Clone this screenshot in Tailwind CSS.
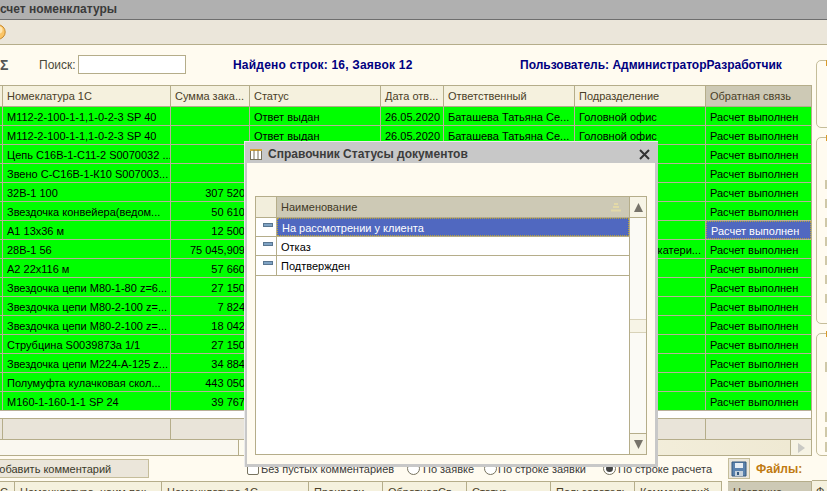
<!DOCTYPE html>
<html lang="ru">
  <head>
    <meta charset="UTF-8" />
    <title>Расчет номенклатуры</title>
    <script src="https://cdn.jsdelivr.net/npm/@tailwindcss/browser@4"></script>
  </head>
  <body class="w-[827px] h-[491px] overflow-hidden relative bg-[#fffbf0] text-[11px] leading-[20px] text-black font-['Liberation_Sans',sans-serif]">
    <!-- title + toolbar -->
    <div class="h-[20px] bg-[#b0b0b0] border-b border-[#6e6e6e] text-[#3a3a3a] font-bold text-[12px] leading-[19px] whitespace-nowrap">счет номенклатуры</div>
    <div class="h-[25px] bg-[#ebe6da] border-b border-[#b5ad8a] flex items-center">
      <svg class="w-[16px] h-[16px] -ml-[10px]" viewBox="0 0 16 16"><circle cx="8" cy="8" r="7.2" fill="#fbc566" stroke="#c78a2e"/><circle cx="9" cy="6" r="3.5" fill="#ffe6b0"/></svg>
    </div>

    <div class="flex">
      <div class="w-[812px] shrink-0">
        <!-- search row -->
        <div class="h-[40px] flex items-center relative">
          <span class="w-[39px] font-bold text-[#555] text-[14px]">Σ</span>
          <span class="text-[#4a4a3a] w-[39px] text-[12px]">Поиск:</span>
          <div class="w-[108px] h-[19px] bg-white border border-[#b5ad8a] mt-[-1px]"></div>
          <span class="ml-[47px] w-[287px] font-bold text-[12px] tracking-[0.2px] text-[#000080] whitespace-nowrap">Найдено строк: 16, Заявок 12</span>
          <span class="font-bold text-[12px] text-[#000080] whitespace-nowrap">Пользователь: АдминистраторРазработчик</span>
        </div>

        <!-- main table -->
        <div class="border-t border-[#b5ad8a] border-r">
          <div id="grid-head" class="flex h-[21px] bg-[#f5f1de] text-[#4a4028] border-b border-[#b5ad8a]">
            <div class="w-[3px] border-r border-[#b5ad8a]"></div>
            <div class="w-[168px] px-[4px] border-r border-[#b5ad8a] leading-[21px]">Номеклатура 1С</div>
            <div class="w-[79px] px-[4px] border-r border-[#b5ad8a] leading-[21px] whitespace-nowrap">Сумма зака...</div>
            <div class="w-[131px] px-[4px] border-r border-[#b5ad8a] leading-[21px]">Статус</div>
            <div class="w-[63px] px-[4px] border-r border-[#b5ad8a] leading-[21px] whitespace-nowrap">Дата отв...</div>
            <div class="w-[131px] px-[4px] border-r border-[#b5ad8a] leading-[21px]">Ответственный</div>
            <div class="w-[131px] px-[4px] border-r border-[#b5ad8a] leading-[21px]">Подразделение</div>
            <div class="w-[105px] px-[4px] bg-[#cdc9b5] leading-[21px]">Обратная связь</div>
          </div>
          <div id="grid-rows"></div>
          <div class="h-[7px] bg-white"></div>
          <div class="flex h-[22px] bg-[#e9e4d9] border-y border-[#b5ad8a]">
            <div class="w-[3px] border-r border-[#b5ad8a]"></div>
            <div class="w-[168px] border-r border-[#b5ad8a]"></div>
            <div class="w-[79px] border-r border-[#b5ad8a]"></div>
            <div class="w-[131px] border-r border-[#b5ad8a]"></div>
            <div class="w-[63px] border-r border-[#b5ad8a]"></div>
            <div class="w-[131px] border-r border-[#b5ad8a]"></div>
            <div class="w-[131px] border-r border-[#b5ad8a]"></div>
          </div>
          <div class="flex h-[16px] border-b border-[#b5ad8a]">
            <div class="w-[239px] bg-[#faf8f0] border-r border-[#b5ad8a]"></div>
            <div class="flex-1 bg-linear-to-r from-[#fdfbef] to-[#efe9d3]"></div>
            <div class="w-[21px] bg-[#f6f3e4] border-l border-[#b5ad8a] flex items-center justify-center">
              <svg class="w-[7px] h-[10px]" viewBox="0 0 7 10"><path d="M0 0L7 5L0 10Z" fill="#c9c9c4"/></svg>
            </div>
          </div>
        </div>

        <!-- comments bar -->
        <div class="h-[25px] flex items-center relative">
          <div class="w-[195px] h-[19px] -ml-[46px] shrink-0 bg-[#ebe6da] border border-[#c5bd9a] text-center text-[#3a3a2a] leading-[18px]">Добавить комментарий</div>
          <span class="w-[12px] h-[12px] ml-[98px] shrink-0 rounded-[2px] border border-[#77735f] bg-white"></span>
          <span class="ml-[2px] w-[146px] text-[#3a3a3a] whitespace-nowrap">Без пустых комментариев</span>
          <span class="w-[13px] h-[13px] shrink-0 rounded-full border border-[#77735f] bg-white"></span>
          <span class="ml-[3px] w-[61px] text-[#3a3a3a] whitespace-nowrap">По заявке</span>
          <span class="w-[13px] h-[13px] shrink-0 rounded-full border border-[#77735f] bg-white"></span>
          <span class="ml-[1px] w-[105px] text-[#3a3a3a] whitespace-nowrap">По строке заявки</span>
          <span class="w-[13px] h-[13px] shrink-0 rounded-full border border-[#77735f] bg-white flex items-center justify-center"><span class="w-[7px] h-[7px] rounded-full bg-[#444]"></span></span>
          <span class="ml-[2px] w-[110px] text-[#3a3a3a] whitespace-nowrap">По строке расчета</span>
          <div class="w-[22px] h-[21px] shrink-0 bg-[#ebe6da] border border-[#c5bd9a] flex items-center justify-center">
            <svg class="w-[16px] h-[16px]" viewBox="0 0 16 16"><path d="M1 1H15V15H1Z" fill="#5b82ad" stroke="#35597f"/><rect x="4" y="2" width="8" height="5" fill="#e8eef4"/><rect x="4" y="10" width="8" height="5" fill="#c6d2dc"/><rect x="6" y="11" width="2" height="3" fill="#35597f"/></svg>
          </div>
          <span class="ml-[6px] font-bold text-[12px] text-[#c07a10]">Файлы:</span>
        </div>

        <!-- lower tables header -->
        <div class="flex h-[21px] text-[#4a4028] whitespace-nowrap">
          <div class="flex w-[722px] bg-[#f5f1de] border-t border-r border-[#b5ad8a] leading-[20px] mr-[6px]">
            <div class="w-[15px] border-r border-[#b5ad8a] overflow-hidden">С</div>
            <div class="w-[147px] pl-[5px] border-r border-[#b5ad8a] overflow-hidden">Номенклатура, наим.пок</div>
            <div class="w-[147px] pl-[5px] border-r border-[#b5ad8a] overflow-hidden">Номенклатура 1С</div>
            <div class="w-[74px] pl-[5px] border-r border-[#b5ad8a] overflow-hidden">Проиводи</div>
            <div class="w-[84px] pl-[5px] border-r border-[#b5ad8a] overflow-hidden">ОбратнаяСв</div>
            <div class="w-[84px] pl-[5px] border-r border-[#b5ad8a] overflow-hidden">Статус</div>
            <div class="w-[84px] pl-[5px] border-r border-[#b5ad8a] overflow-hidden">Пользователь</div>
            <div class="flex-1 pl-[5px] overflow-hidden">Комментарий</div>
          </div>
          <div class="w-[84px] pl-[5px] bg-[#cdc9b5] border-t border-r border-[#b5ad8a] leading-[20px] shrink-0">Название</div>
        </div>
      </div>

      <!-- right side groups, cut off by the window -->
      <div class="flex-1 pl-[4px] pt-[15px] flex flex-col gap-[9px]">
        <div class="relative w-[24px] h-[68px] rounded-[5px] border border-[#c5bd9a]">
          <span class="absolute left-[9px] -top-[1px] w-[2px] h-[6px] bg-[#d99a2b]"></span>
        </div>
        <div class="relative w-[24px] h-[187px] rounded-[5px] border border-[#c5bd9a] pl-[8px] pt-[42px] flex flex-col gap-[10px]">
          <span class="absolute left-[9px] -top-[3px] w-[2px] h-[6px] bg-[#d99a2b]"></span>
          <span class="w-[3px] h-[9px] shrink-0 bg-[#cfc8a8]"></span>
          <span class="w-[3px] h-[9px] shrink-0 bg-[#cfc8a8]"></span>
          <span class="w-[3px] h-[9px] shrink-0 bg-[#cfc8a8]"></span>
          <span class="w-[3px] h-[9px] shrink-0 bg-[#cfc8a8]"></span>
          <span class="w-[3px] h-[9px] shrink-0 bg-[#cfc8a8]"></span>
          <span class="w-[3px] h-[9px] shrink-0 bg-[#cfc8a8]"></span>
          <span class="w-[3px] h-[9px] shrink-0 bg-[#cfc8a8]"></span>
        </div>
        <div class="relative w-[24px] h-[123px] rounded-[5px] border border-[#c5bd9a] pl-[8px] pt-[28px] flex flex-col gap-[5px]">
          <span class="absolute left-[9px] -top-[3px] w-[2px] h-[6px] bg-[#d99a2b]"></span>
          <span class="w-[3px] h-[10px] mb-[35px] shrink-0 bg-[#cfc8a8]"></span>
          <span class="w-[3px] h-[10px] shrink-0 bg-[#cfc8a8]"></span>
          <span class="w-[3px] h-[10px] shrink-0 bg-[#cfc8a8]"></span>
          <span class="w-[3px] h-[10px] shrink-0 bg-[#cfc8a8]"></span>
        </div>
        <div class="mt-[15px] -ml-[4px] h-[21px] shrink-0 bg-[#f5f1de] border-t border-[#b5ad8a] pl-[4px] text-[#4a4028]">Ф</div>
      </div>
    </div>

    <!-- dialog -->
    <div class="absolute left-[244px] top-[141px] w-[414px] h-[326px] bg-[#c8c8c8] border-t border-l border-[#ececec] flex flex-col">
      <div class="h-[21px] shrink-0 flex items-center pl-[4px] pr-[8px] pt-[3px]">
        <svg class="w-[14px] h-[13px] mr-[5px]" viewBox="0 0 14 13"><rect x="1.5" y="1.5" width="11" height="10" fill="#fff" stroke="#77705a"/><path d="M1 2H13" stroke="#d6a43c" stroke-width="2"/><path d="M5 2V11M9 2V11" stroke="#77705a"/></svg>
        <span class="font-bold text-[12px] text-[#3c3c3c]">Справочник Статусы документов</span>
        <svg class="w-[11px] h-[11px] ml-auto" viewBox="0 0 11 11"><path d="M1 1L10 10M10 1L1 10" stroke="#333" stroke-width="2"/></svg>
      </div>
      <div class="flex-1 ml-[2px] mr-[3px] mb-[3px] bg-[#fffbf0] pt-[33px] pb-[9px] px-[8px] flex flex-col">
        <div class="flex-1 flex border border-[#b5ad8a] bg-white">
          <div class="flex-1 flex flex-col">
            <div class="flex h-[21px] bg-[#cdc9b5] border-b border-[#b5ad8a] text-[#3f3826]">
              <div class="w-[21px] bg-[#f2eedc] border-r border-[#b5ad8a]"></div>
              <div class="flex-1 pl-[4px] leading-[21px]">Наименование</div>
              <svg class="w-[12px] h-[9px] mr-[7px] mt-[6px]" viewBox="0 0 12 9"><path d="M4 1H8M3 4H9M1 7.5H11" stroke="#e3d9a8" stroke-width="2"/></svg>
            </div>
            <div class="flex h-[19px] border-b border-[#b5ad8a]">
              <div class="w-[21px] border-r border-[#b5ad8a] pl-[7px] pt-[5px]"><div class="w-[10px] h-[4px] bg-[#7fa3c4] border border-[#5a7690]"></div></div>
              <div class="flex-1 pl-[4px] bg-[#5068c0] text-white border border-dotted border-[#b8a23c] leading-[18px]">На рассмотрении у клиента</div>
            </div>
            <div class="flex h-[19px] border-b border-[#b5ad8a]">
              <div class="w-[21px] border-r border-[#b5ad8a] pl-[7px] pt-[5px]"><div class="w-[10px] h-[4px] bg-[#7fa3c4] border border-[#5a7690]"></div></div>
              <div class="flex-1 pl-[4px]">Отказ</div>
            </div>
            <div class="flex h-[20px] border-b border-[#b5ad8a]">
              <div class="w-[21px] border-r border-[#b5ad8a] pl-[7px] pt-[5px]"><div class="w-[10px] h-[4px] bg-[#7fa3c4] border border-[#5a7690]"></div></div>
              <div class="flex-1 pl-[4px]">Подтвержден</div>
            </div>
          </div>
          <div class="w-[17px] border-l border-[#b5ad8a] flex flex-col bg-[#fbfaf5]">
            <div class="h-[21px] bg-[#f7f4e6] border-b border-[#b5ad8a] flex items-center justify-center">
              <svg class="w-[9px] h-[9px]" viewBox="0 0 9 9"><path d="M4.5 0L9 9H0Z" fill="#77736a"/></svg>
            </div>
            <div class="flex-1"></div>
            <div class="h-[14px] mb-[100px] bg-[#f7f4e6] border-y border-[#d8d2b8]"></div>
            <div class="h-[21px] bg-[#f7f4e6] border-t border-[#b5ad8a] flex items-center justify-center">
              <svg class="w-[9px] h-[9px]" viewBox="0 0 9 9"><path d="M0 0H9L4.5 9Z" fill="#77736a"/></svg>
            </div>
          </div>
        </div>
      </div>
    </div>

    <script>
      const data = [
        ["М112-2-100-1-1,1-0-2-3 SP 40", "", "Ответ выдан", "26.05.2020", "Баташева Татьяна Се...", "Головной офис"],
        ["М112-2-100-1-1,1-0-2-3 SP 40", "", "Ответ выдан", "26.05.2020", "Баташева Татьяна Се...", "Головной офис"],
        ["Цепь С16В-1-С11-2 S0070032 ...", ""],
        ["Звено С-С16В-1-К10 S007003...", ""],
        ["32В-1 100", "307 520"],
        ["Звездочка конвейера(ведом...", "50 610"],
        ["А1 13х36 м", "12 500"],
        ["28В-1 56", "75 045,909"],
        ["А2 22х116 м", "57 660"],
        ["Звездочка цепи М80-1-80 z=6...", "27 150"],
        ["Звездочка цепи М80-2-100 z=...", "7 824"],
        ["Звездочка цепи М80-2-100 z=...", "18 042"],
        ["Струбцина S0039873а 1/1", "27 150"],
        ["Звездочка цепи М224-А-125 z...", "34 884"],
        ["Полумуфта кулачковая скол...", "443 050"],
        ["М160-1-160-1-1 SP 24", "39 767"],
      ];
      const line = "border-r border-[#b9b09a] px-[4px] whitespace-nowrap overflow-hidden";
      document.getElementById("grid-rows").innerHTML = data.map((r, i) => {
        const last = i === 6
          ? "bg-[#5068c0] text-white border border-dotted border-[#b8a23c] leading-[18px]"
          : "";
        const dept = i === 7 ? "катери..." : (r[5] || "");
        return `<div class="flex h-[19px] bg-[#00ff00] border-b border-[#b9b09a]">
          <div class="w-[3px] border-r border-[#b9b09a]"></div>
          <div class="w-[168px] ${line}">${r[0]}</div>
          <div class="w-[79px] text-right ${line}">${r[1]}</div>
          <div class="w-[131px] ${line}">${r[2] || ""}</div>
          <div class="w-[63px] ${line}">${r[3] || ""}</div>
          <div class="w-[131px] ${line}">${r[4] || ""}</div>
          <div class="w-[131px] ${line} ${i === 7 ? "text-right" : ""}">${dept}</div>
          <div class="w-[105px] px-[4px] whitespace-nowrap ${last}">Расчет выполнен</div>
        </div>`;
      }).join("");
    </script>
  </body>
</html>
